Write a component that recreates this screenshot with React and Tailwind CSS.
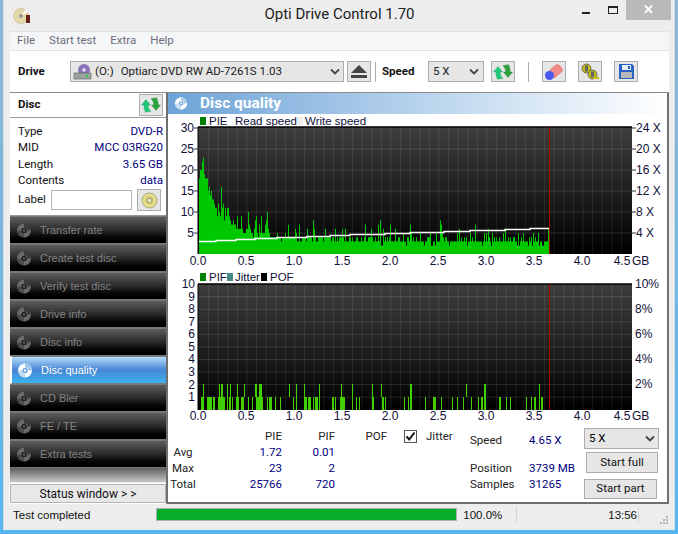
import React from "react";

const ui = { fontFamily: 'Roboto, "Noto Sans", sans-serif' };
const arial = { fontFamily: '"Liberation Sans", sans-serif' };

function Refresh({ size = 20 }) {
  const a = "M5.5 5 L10.5 11 L8 11 C8 14 8.7 16 11 18 L5 19 C3.5 16 3.2 14 3.2 11 L0.5 11 Z";
  return (
    <svg width={size} height={size} viewBox="0 0 22 22">
      <path d={a} fill="#25c878" stroke="#129a58" strokeWidth="0.4" />
      <path d={a} transform="rotate(180 11 11)" fill="#2ca53c" stroke="#17752a" strokeWidth="0.4" />
    </svg>
  );
}

function Disc({ color = "#8a8a8a", hole = "#222", size = 17 }) {
  return (
    <svg width={size} height={size} viewBox="0 0 17 17">
      <circle cx="8" cy="8.5" r="7" fill={color} />
      <path d="M8 1.5 A7 7 0 0 1 15 8.5 L11 8.5 A3 3 0 0 0 8 5.5 Z" fill={hole} opacity="0.55" />
      <path d="M8 15.5 A7 7 0 0 1 1 8.5 L5 8.5 A3 3 0 0 0 8 11.5 Z" fill={hole} opacity="0.35" />
      <circle cx="8" cy="8.5" r="2.6" fill={hole} />
      <circle cx="8" cy="8.5" r="1.2" fill={color} />
    </svg>
  );
}

function IconBtn({ children, className = "" }) {
  return (
    <div className={`flex h-[21px] items-center justify-center border border-[#adadad] bg-[#e6e6e6] ${className}`}>
      {children}
    </div>
  );
}

function SelectArrow() {
  return (
    <svg width="10" height="7" viewBox="0 0 10 7">
      <path d="M1 1.5 L5 5.5 L9 1.5" fill="none" stroke="#444" strokeWidth="1.8" />
    </svg>
  );
}

function NavButton({ label, active }) {
  return (
    <div
      style={arial}
      className={
        active
          ? "flex h-[28px] items-center gap-[7px] border-y border-[#7a7a7a] border-l-2 border-l-white bg-gradient-to-b from-[#b5dcfb] via-[#4684d3] to-[#39b5f2] pl-[5px] pt-px text-[11px] text-white"
          : "flex h-[28px] items-center gap-[7px] border-y border-[#777] bg-gradient-to-b from-[#5e5e5e] via-[#2a2a2a] to-[#000] pl-[6px] pt-px text-[11px] text-[#838383]"
      }
    >
      <Disc color={active ? "#fff" : "#6a6a6a"} hole={active ? "#5b9be0" : "#141414"} />
      <span>{label}</span>
    </div>
  );
}

function noise(i) {
  const s = Math.sin(i * 12.9898) * 43758.5453;
  return s - Math.floor(s);
}

const peaks = {
  199: 18, 200: 20, 201: 20, 202: 22, 203: 23, 204: 19, 205: 18, 206: 18, 207: 18, 208: 15, 209: 16, 210: 14, 211: 15, 212: 13, 213: 13, 214: 12, 215: 11, 216: 11,
  217: 9, 218: 12, 219: 10, 220: 9, 221: 16, 222: 11, 223: 12, 224: 8, 225: 11, 226: 9, 227: 11, 228: 11, 229: 9, 233: 8, 234: 7, 237: 9, 241: 9, 248: 10, 249: 7,
  255: 8, 256: 9, 259: 7, 261: 9, 265: 7, 266: 8, 267: 10, 268: 6, 288: 7, 295: 6, 299: 7, 307: 6, 313: 8, 314: 6, 325: 6, 335: 6, 342: 6, 345: 6, 365: 7, 371: 6,
  378: 7, 380: 8, 383: 6, 390: 7, 395: 6, 403: 5, 410: 7, 411: 5, 420: 5, 430: 5, 436: 5, 440: 8, 441: 7, 442: 5, 457: 5, 459: 6, 470: 5, 475: 7, 484: 5, 486: 5,
  488: 6, 492: 5, 503: 5, 505: 6, 518: 5, 523: 5, 533: 5, 538: 5, 548: 6,
};

function pieHeight(x) {
  if (peaks[x]) return peaks[x];
  const d = x - 199;
  const env = 3 + 9 * Math.exp(-d / 28) + 1.6 * Math.exp(-d / 110);
  const n = noise(x);
  return Math.max(2, Math.round(env + (n - 0.6) * 1.6));
}

const speedPts = "199,241.5 216,241.5 216,240.5 236,240.5 236,239.5 255,239.5 255,238.5 277,238.5 277,237.5 307,237.5 307,236.5 330,236.5 330,235.5 350,235.5 350,234.5 385,234.5 385,233.5 410,233.5 410,232.5 444,232.5 444,231.5 470,231.5 470,230.5 505,230.5 505,229.5 530,229.5 530,228.5 549,228.5";

function Grid({ y0, y1, hs, id }) {
  const vs = [];
  for (let i = 1; i < 45; i++) vs.push(199 + i * 9.6);
  return (
    <>
      <defs>
        <linearGradient id={id} x1="0" x2="0" y1="0" y2="1">
          <stop offset="0" stopColor="#3e3e3e" />
          <stop offset="1" stopColor="#000" />
        </linearGradient>
      </defs>
      <rect x="198" y={y0} width="434" height={y1 - y0} fill={`url(#${id})`} />
      {vs.map((x) => (
        <line key={x} x1={x} x2={x} y1={y0} y2={y1} stroke="#fff" strokeOpacity="0.09" />
      ))}
      {hs.map((y) => (
        <line key={y} x1="198" x2="632" y1={y} y2={y} stroke="#fff" strokeOpacity="0.12" />
      ))}
      <line x1="198" x2="632" y1={y0} y2={y0} stroke="#000" strokeWidth="1.5" />
      <line x1="198" x2="198" y1={y0} y2={y1} stroke="#000" />
    </>
  );
}

function XLabels({ y }) {
  const labels = ["0.0", "0.5", "1.0", "1.5", "2.0", "2.5", "3.0", "3.5", "4.0"];
  return (
    <g fill="#10103a" fontSize="12" fontFamily='"Liberation Sans", sans-serif'>
      {labels.map((l, i) => (
        <text key={l} x={198 + i * 48} y={y} textAnchor="middle">{l}</text>
      ))}
      <text x="622" y={y} textAnchor="middle">4.5</text>
      <text x="632" y={y}>GB</text>
    </g>
  );
}

const pifH1 = [[201,204],[207,211],[211,212],[213,215],[218,225],[227,228],[229,231],[232,233],[236,239],[241,244],[248,249],[252,253],[256,263],[267,268],[269,272],[275,276],[280,281],[293,294],[296,297],[304,307],[308,311],[313,314],[315,318],[319,320],[332,334],[335,336],[340,345],[352,353],[356,357],[359,360],[372,374],[382,384],[385,386],[404,405],[408,409],[410,412],[425,426],[433,436],[441,442],[452,453],[457,458],[463,464],[471,472],[478,479],[481,483],[484,486],[499,501],[506,507],[510,511],[526,527],[531,532],[534,536],[539,540],[541,543]];
const pifH2 = [[203,204],[219,220],[221,223],[227,228],[230,231],[237,238],[244,245],[255,257],[259,262],[289,290],[296,297],[304,305],[319,320],[341,342],[352,353],[372,373],[381,382],[410,412],[466,467],[484,486],[539,540]];

function Charts() {
  const bars = [];
  for (let x = 199; x < 550; x++) bars.push(x);
  const dy = 12.56;
  const h2 = [];
  for (let i = 1; i < 10; i++) h2.push(409.7 - i * dy);
  return (
    <svg width="499" height="314" viewBox="168 114 499 314" className="block">
      <g fontFamily='"Liberation Sans", sans-serif' fontSize="11.5" fill="#10103a">
        <rect x="200" y="117" width="6" height="8" fill="#008000" />
        <text x="209" y="125">PIE</text>
        <text x="235" y="125">Read speed</text>
        <rect x="297" y="117" width="6" height="8" fill="#eeeeee" />
        <text x="305" y="125">Write speed</text>
      </g>
      <Grid y0={127} y1={254} hs={[233, 212, 191, 170, 149]} id="g1" />
      {bars.map((x) => {
        const h = pieHeight(x) * 4.2;
        return <rect key={x} x={x} y={254 - h} width="1" height={h} fill="#00c800" />;
      })}
      <polyline points={speedPts} fill="none" stroke="#fff" strokeWidth="1.4" />
      <line x1="549.5" x2="549.5" y1="127" y2="254" stroke="#b00000" />
      <g fontFamily='"Liberation Sans", sans-serif' fontSize="12" fill="#10103a">
        {[[30, 128], [25, 149], [20, 170], [15, 191], [10, 212], [5, 233]].map(([v, y]) => (
          <g key={v}>
            <text x="194" y={y + 4} textAnchor="end">{v}</text>
            <line x1="194" x2="198" y1={y} y2={y} stroke="#333" />
          </g>
        ))}
        {[["24 X", 128], ["20 X", 149], ["16 X", 170], ["12 X", 191], ["8 X", 212], ["4 X", 233]].map(([v, y]) => (
          <g key={v}>
            <line x1="632" x2="636" y1={y} y2={y} stroke="#333" />
            <text x="636" y={y + 4}>{v}</text>
          </g>
        ))}
      </g>
      <XLabels y={265} />

      <g fontFamily='"Liberation Sans", sans-serif' fontSize="11.5" fill="#10103a">
        <rect x="200" y="273" width="6" height="8" fill="#008000" />
        <text x="209" y="281">PIF</text>
        <rect x="227" y="273" width="6" height="8" fill="#488888" />
        <text x="235" y="281">Jitter</text>
        <rect x="261" y="273" width="6" height="8" fill="#000" />
        <text x="270" y="281">POF</text>
      </g>
      <Grid y0={284} y1={410} hs={h2} id="g2" />
      {pifH1.map(([a, b]) => (
        <rect key={a} x={a} y="397" width={b - a} height="13" fill="#40d000" />
      ))}
      {pifH2.map(([a, b]) => (
        <rect key={"t" + a} x={a} y="384" width={b - a} height="13" fill="#40d000" />
      ))}
      <line x1="549.5" x2="549.5" y1="284" y2="410" stroke="#b00000" />
      <g fontFamily='"Liberation Sans", sans-serif' fontSize="12" fill="#10103a">
        {[1, 2, 3, 4, 5, 6, 7, 8, 9, 10].map((v) => (
          <text key={v} x="195" y={409.7 - v * dy + 4} textAnchor="end">{v}</text>
        ))}
        {[["10%", 284], ["8%", 309], ["6%", 334], ["4%", 359], ["2%", 384]].map(([v, y]) => (
          <text key={v} x="635" y={y + 4}>{v}</text>
        ))}
      </g>
      <XLabels y={420} />
    </svg>
  );
}

function StatRow({ label, a, b, className = "" }) {
  return (
    <div className={`flex h-[16px] items-center ${className}`}>
      <span className="w-[26px] whitespace-nowrap text-center text-[#222]">{label}</span>
      <span className="w-[86px] text-right text-[#000080]">{a}</span>
      <span className="w-[53px] text-right text-[#000080]">{b}</span>
    </div>
  );
}

function InfoRow({ k, v }) {
  return (
    <div className="flex h-[16.5px] items-center justify-between">
      <span className="text-[#111]">{k}</span>
      <span className="text-[#000080]">{v}</span>
    </div>
  );
}

export default function App() {
  return (
    <div className="flex h-[534px] w-[678px] flex-col overflow-hidden bg-gradient-to-b from-[#8fb6d4] to-[#55b6ee] pl-[3px] pr-[3px] pb-[4px]" style={ui}>
      <div className="flex h-[530px] flex-col border-x border-[#d5dde3] bg-[#ededed] pl-[6px] pr-[5px]">
        <div className="relative flex h-[31px] shrink-0 items-center justify-center pb-[2px] text-[15px] text-[#222]">
          <svg width="18" height="18" viewBox="0 0 18 18" className="absolute left-[3px] top-[7px]">
            <circle cx="8" cy="9" r="7.5" fill="#e3d9a8" />
            <circle cx="8" cy="9" r="7.5" fill="none" stroke="#bdb68f" strokeWidth="0.6" />
            <path d="M8 9 L13 2 L15 5 Z" fill="#fff" />
            <circle cx="8" cy="9" r="2" fill="#999" />
            <rect x="13" y="8" width="4" height="8" fill="#6a2018" />
          </svg>
          <span>Opti Drive Control 1.70</span>
          <div className="absolute right-[-2px] top-0 flex items-start">
            <div className="flex h-[20px] w-[27px] items-center justify-center"><div className="mt-[6px] h-[2px] w-[8px] bg-[#222]" /></div>
            <div className="flex h-[20px] w-[27px] items-center justify-center"><div className="h-[8px] w-[10px] border border-t-2 border-[#222]" /></div>
            <div className="flex h-[20px] w-[45px] items-center justify-center bg-[#b9b9b9] text-[13px] font-bold text-white">✕</div>
          </div>
        </div>

        <div className="flex h-[19px] shrink-0 items-center gap-[14px] border-t border-[#dfe3e8] bg-[#f4f6f8] pl-[7px] text-[11.5px] text-[#6d6d78]">
          <span>File</span>
          <span>Start test</span>
          <span>Extra</span>
          <span>Help</span>
        </div>

        <div className="flex h-[42px] shrink-0 items-center border-t border-[#e3e3e3] bg-white pl-[8px] text-[11.5px]">
          <span className="w-[52px] font-bold text-[#111]">Drive</span>
          <div className="flex h-[21px] w-[274px] items-center border border-[#adadad] bg-[#e6e6e6] pl-[2px] pr-[3px] text-[#222]">
            <svg width="20" height="18" viewBox="0 0 20 18">
              <circle cx="11" cy="7" r="6" fill="#8a74b8" />
              <circle cx="11" cy="7" r="1.8" fill="#e8e0f4" />
              <rect x="1" y="10" width="17" height="6" fill="#9aa5a0" stroke="#55605a" strokeWidth="0.6" />
              <rect x="13" y="12" width="2" height="2" fill="#2fbf4a" />
            </svg>
            <span className="ml-[2px]">(O:)</span>
            <span className="ml-[7px] flex-1">Optiarc DVD RW AD-7261S 1.03</span>
            <SelectArrow />
          </div>
          <IconBtn className="ml-[3px] w-[24px]">
            <svg width="16" height="13" viewBox="0 0 16 13">
              <path d="M8 0 L16 8 L0 8 Z" fill="#444" />
              <rect x="0" y="10" width="16" height="3" fill="#444" />
            </svg>
          </IconBtn>
          <div className="ml-[4px] h-[20px] w-px bg-[#adadad]" />
          <span className="ml-[6px] w-[46px] font-bold text-[#111]">Speed</span>
          <div className="flex h-[21px] w-[56px] items-center justify-between border border-[#adadad] bg-[#e6e6e6] pl-[4px] pr-[4px] text-[#222]">
            <span>5 X</span>
            <SelectArrow />
          </div>
          <IconBtn className="ml-[7px] w-[24px]"><Refresh /></IconBtn>
          <div className="ml-[13px] h-[20px] w-px bg-[#adadad]" />
          <IconBtn className="ml-[13px] w-[24px]">
            <svg width="20" height="18" viewBox="0 0 20 18">
              <rect x="7" y="1" width="9" height="13" rx="3" transform="rotate(50 11 8)" fill="#f28a8a" stroke="#d06060" strokeWidth="0.5" />
              <circle cx="5.5" cy="12.5" r="4.5" fill="#4a5af0" />
            </svg>
          </IconBtn>
          <IconBtn className="ml-[12px] w-[24px]">
            <svg width="20" height="18" viewBox="0 0 20 18">
              <circle cx="6.5" cy="5.5" r="4.5" fill="#c4bc10" stroke="#555" strokeWidth="0.8" />
              <rect x="5" y="2.5" width="3" height="6" fill="#666" />
              <circle cx="12.5" cy="11.5" r="4.5" fill="#c4bc10" stroke="#555" strokeWidth="0.8" />
              <rect x="11" y="8.5" width="3" height="6" fill="#666" />
              <path d="M13 14 h6 v2 h-6z" fill="#c4bc10" />
            </svg>
          </IconBtn>
          <IconBtn className="ml-[12px] w-[24px]">
            <svg width="17" height="17" viewBox="0 0 17 17">
              <path d="M1 1 H14 L16 3 V16 H1 Z" fill="#2a62c8" />
              <rect x="4" y="2" width="9" height="5" fill="#e8eef8" />
              <rect x="10" y="3" width="2" height="3" fill="#2a62c8" />
              <rect x="3" y="9" width="11" height="6" fill="#b8b8b8" />
            </svg>
          </IconBtn>
        </div>

        <div className="flex h-[412px] shrink-0 border-t border-[#8a8a8a] bg-white">
          <div className="flex w-[156px] shrink-0 flex-col bg-[#ededed] text-[11.5px]">
            <div className="flex h-[25px] shrink-0 items-center justify-between border-b border-[#9a9a9a] bg-white pl-[8px] pr-[3px]">
              <span className="font-bold text-[#111]">Disc</span>
              <IconBtn className="h-[22px] w-[24px]"><Refresh /></IconBtn>
            </div>
            <div className="flex h-[98px] shrink-0 flex-col border-b border-[#999] bg-white pl-[8px] pr-[3px] pt-[5px]">
              <InfoRow k="Type" v="DVD-R" />
              <InfoRow k="MID" v="MCC 03RG20" />
              <InfoRow k="Length" v="3.65 GB" />
              <InfoRow k="Contents" v="data" />
              <div className="flex h-[22px] items-center">
                <span className="w-[33px] text-[#111]">Label</span>
                <div className="h-[20px] w-[81px] border border-[#b5b5b5] bg-white" />
                <IconBtn className="ml-[5px] h-[22px] w-[24px]">
                  <svg width="17" height="17" viewBox="0 0 17 17">
                    <circle cx="8.5" cy="8.5" r="7.5" fill="#e6e090" stroke="#8d8d5a" strokeWidth="0.7" />
                    <circle cx="8.5" cy="8.5" r="4" fill="#c9c26a" />
                    <circle cx="8.5" cy="8.5" r="2" fill="#f2f0d2" stroke="#777" strokeWidth="0.5" />
                  </svg>
                </IconBtn>
              </div>
            </div>
            <div className="flex flex-col">
              <NavButton label="Transfer rate" />
              <NavButton label="Create test disc" />
              <NavButton label="Verify test disc" />
              <NavButton label="Drive info" />
              <NavButton label="Disc info" />
              <NavButton label="Disc quality" active />
              <NavButton label="CD Bler" />
              <NavButton label="FE / TE" />
              <NavButton label="Extra tests" />
            </div>
            <div className="h-[14px] shrink-0 bg-gradient-to-b from-[#606060] to-[#c8c8c8]" />
            <div className="mt-[2px] flex h-[19px] shrink-0 items-center justify-center border border-[#b5b5b5] bg-[#e8e8e8] text-[12px] text-[#111] outline outline-1 outline-white">
              Status window &gt; &gt;
            </div>
          </div>

          <div className="flex min-w-0 flex-1 flex-col border-2 border-t-0 border-[#6f6f6f] bg-white">
            <div className="flex h-[21px] shrink-0 items-center gap-[11px] bg-gradient-to-r from-[#6ea3d8] via-[#b7d3ec] to-white pl-[6px] text-[15.5px] font-bold text-white">
              <Disc color="#fff" hole="#6ea3d8" size={15} />
              <span>Disc quality</span>
            </div>
            <div className="h-[314px] shrink-0">
              <Charts />
            </div>
            <div className="flex flex-1 pl-[2px] text-[11.5px]">
              <div className="w-[300px] pt-[2px]">
                <div className="flex h-[13px] items-center text-[#222]">
                  <span className="w-[112px] text-right">PIE</span>
                  <span className="w-[53px] text-right">PIF</span>
                  <span className="w-[52px] text-right">POF</span>
                  <span className="ml-[17px] flex h-[13px] w-[13px] items-center justify-center border border-[#555] bg-white">
                    <svg width="11" height="11" viewBox="0 0 11 11"><path d="M1.5 5.5 L4.2 8.5 L9.5 1.5" fill="none" stroke="#111" strokeWidth="2" /></svg>
                  </span>
                  <span className="ml-[9px]">Jitter</span>
                </div>
                <StatRow label="Avg" a="1.72" b="0.01" className="mt-[2px]" />
                <StatRow label="Max" a="23" b="2" />
                <StatRow label="Total" a="25766" b="720" />
              </div>
              <div className="w-[114px] pt-[5px]">
                <div className="flex h-[16px] items-center"><span className="w-[59px] text-[#222]">Speed</span><span className="text-[#000080]">4.65 X</span></div>
                <div className="mt-[12px] flex h-[16px] items-center"><span className="w-[59px] text-[#222]">Position</span><span className="text-[#000080]">3739 MB</span></div>
                <div className="flex h-[16px] items-center"><span className="w-[59px] text-[#222]">Samples</span><span className="text-[#000080]">31265</span></div>
              </div>
              <div className="flex w-[75px] flex-col items-start gap-[3px]">
                <div className="flex h-[21px] w-[75px] items-center justify-between border border-[#adadad] bg-[#e6e6e6] pl-[4px] pr-[3px]">
                  <span>5 X</span>
                  <SelectArrow />
                </div>
                <div className="ml-[2px] flex h-[21px] w-[72px] items-center justify-center border border-[#adadad] bg-[#e6e6e6] text-[#111]">Start full</div>
                <div className="mt-[3px] flex h-[20px] w-[73px] items-center justify-center border border-[#adadad] bg-[#e6e6e6] text-[#111]">Start part</div>
              </div>
            </div>
          </div>
        </div>

        <div className="flex flex-1 items-start pt-[3px] text-[11.5px] text-[#111]" style={arial}>
          <span className="w-[145px] pl-[3px]">Test completed</span>
          <div className="ml-[1px] mt-[1px] h-[13px] w-[302px] border border-[#b0b0b0] bg-[#06ad2a]" />
          <span className="ml-[6px] w-[53px]">100.0%</span>
          <div className="h-[16px] w-px bg-[#d5d5d5]" />
          <span className="w-[121px] pr-px text-right">13:56</span>
          <div className="h-[16px] w-px bg-[#d5d5d5]" />
          <svg width="9" height="9" viewBox="0 0 9 9" className="ml-[21px] mt-[9px]">
            <path d="M6 0h2v2H6zM3 3h2v2H3zM6 3h2v2H6zM0 6h2v2H0zM3 6h2v2H3zM6 6h2v2H6z" fill="#b5b5b5" />
          </svg>
        </div>
      </div>
    </div>
  );
}
